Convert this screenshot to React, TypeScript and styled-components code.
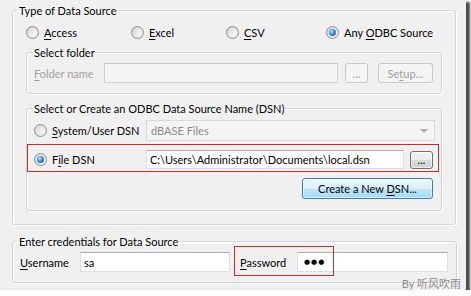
import React from 'react';
import styled, { createGlobalStyle } from 'styled-components';

const GlobalStyle = createGlobalStyle`
  body {
    margin: 0;
    background: #ffffff;
    font-family: Lato, 'Noto Sans', 'Noto Sans CJK SC', sans-serif;
    font-size: 11px;
    color: #000;
  }
`;

const Dialog = styled.div`
  position: relative;
  width: 466px;
  height: 290px;
  box-sizing: border-box;
  padding-top: 3px;
  background: #f0f0f0;
  box-shadow: 3px 3px 2px 1px rgba(45, 45, 45, 0.85);
`;

interface GroupProps {
  $top?: number;
  $left: number;
  $right: number;
  $bottom?: number;
}

const Group = styled.fieldset<GroupProps>`
  margin: ${({ $top }) => $top || 0}px ${({ $right }) => $right}px 0
    ${({ $left }) => $left}px;
  padding: 0 0 ${({ $bottom }) => $bottom || 0}px 0;
  min-width: 0;
  border: 1px solid #d5d5d5;
  border-radius: 3px;
  box-shadow: inset 1px 1px 0 #fff, 1px 1px 0 #fff;
`;

const Legend = styled.legend<{ $offset: number }>`
  margin-left: ${({ $offset }) => $offset}px;
  padding: 0 2px;
  line-height: 15px;
`;

const RadioRow = styled.div`
  display: flex;
  align-items: center;
  height: 16px;
  padding: 6px 0 0 13px;
  margin-bottom: 5px;
`;

const RadioItem = styled.label<{ $width?: number }>`
  display: flex;
  align-items: center;
  gap: 5px;
  width: ${({ $width }) => ($width ? `${$width}px` : 'auto')};
  flex: none;
  white-space: nowrap;
`;

const Radio = styled.span<{ $checked?: boolean }>`
  position: relative;
  width: 11px;
  height: 11px;
  flex: none;
  border-radius: 50%;
  border: 1px solid #8e8f8f;
  background: radial-gradient(circle at 65% 65%, #f7f7f7 0%, #e2e2e2 55%, #c9c9c9 100%);

  &::after {
    content: '';
    display: ${({ $checked }) => ($checked ? 'block' : 'none')};
    position: absolute;
    left: 2px;
    top: 2px;
    width: 7px;
    height: 7px;
    border-radius: 50%;
    background: radial-gradient(circle at 40% 35%, #bfe8ff 0%, #3a8fd9 45%, #104d8c 100%);
  }
`;

const Key = styled.span`
  text-decoration: underline;
  text-underline-offset: 2px;
`;

const FolderRow = styled.div`
  display: flex;
  align-items: center;
  height: 20px;
  padding: 3px 9px 0 7px;
`;

const Label = styled.span<{ $width: number; $disabled?: boolean; $ml?: number }>`
  width: ${({ $width }) => $width}px;
  margin-left: ${({ $ml }) => $ml || 0}px;
  flex: none;
  white-space: nowrap;
  color: ${({ $disabled }) => ($disabled ? '#a2a2a2' : '#000')};
`;

const TextBox = styled.div<{ $width?: number; $disabled?: boolean; $height?: number }>`
  box-sizing: border-box;
  display: flex;
  align-items: center;
  width: ${({ $width }) => ($width ? `${$width}px` : 'auto')};
  flex: ${({ $width }) => ($width ? 'none' : '1')};
  height: ${({ $height }) => $height || 20}px;
  padding: 0 3px;
  border: 1px solid ${({ $disabled }) => ($disabled ? '#d2d2d2' : '#dbdfe6')};
  border-top-color: ${({ $disabled }) => ($disabled ? '#c8c8c8' : '#abadb3')};
  background: ${({ $disabled }) => ($disabled ? '#f4f4f4' : '#ffffff')};
  color: ${({ $disabled }) => ($disabled ? '#8a8a8a' : '#000')};
  white-space: nowrap;
  overflow: hidden;
`;

const Button = styled.div<{ $width: number; $height?: number; $disabled?: boolean; $default?: boolean; $ml?: number }>`
  box-sizing: border-box;
  display: flex;
  align-items: center;
  justify-content: center;
  width: ${({ $width }) => $width}px;
  height: ${({ $height }) => $height || 20}px;
  margin-left: ${({ $ml }) => $ml || 0}px;
  flex: none;
  border-radius: 3px;
  white-space: nowrap;
  border: 1px solid
    ${({ $disabled, $default }) => ($disabled ? '#c5c8ca' : $default ? '#3c7fb1' : '#707070')};
  color: ${({ $disabled }) => ($disabled ? '#9d9d9d' : '#000')};
  background: ${({ $disabled, $default }) =>
    $disabled
      ? '#f4f4f4'
      : $default
      ? 'linear-gradient(#eaf6fd 0%, #d9f0fc 50%, #bee6fd 50%, #a7d9f5 100%)'
      : 'linear-gradient(#f2f2f2 0%, #ebebeb 50%, #dddddd 50%, #cfcfcf 100%)'};
  box-shadow: ${({ $disabled }) => ($disabled ? 'none' : 'inset 0 0 0 1px rgba(255,255,255,0.6)')};
`;

const DsnRow = styled.div`
  display: flex;
  align-items: center;
  height: 21px;
  padding: 4px 6px 0 7px;
`;

const ComboBox = styled.div`
  position: relative;
  box-sizing: border-box;
  flex: 1;
  height: 21px;
  display: flex;
  align-items: center;
  padding: 0 4px;
  border: 1px solid #d9d9d9;
  background: #f4f4f4;
  color: #8a8a8a;

  &::after {
    content: '';
    position: absolute;
    right: 6px;
    top: 8px;
    border-left: 4px solid transparent;
    border-right: 4px solid transparent;
    border-top: 4px solid #b0b0b0;
  }
`;

const HighlightRow = styled.div`
  display: flex;
  align-items: center;
  margin: 3px 2px 0 0;
  padding: 5px 5px 2px 6px;
  border: 1px solid #c0302e;
`;

const ButtonRow = styled.div`
  display: flex;
  justify-content: flex-end;
  padding: 6px 8px 0 0;
`;

const CredentialRow = styled.div`
  position: relative;
  display: flex;
  align-items: center;
  height: 20px;
  padding: 3px 0 0 7px;
`;

const Highlight = styled.div`
  position: absolute;
  left: 221px;
  top: -3px;
  width: 100px;
  height: 30px;
  box-sizing: border-box;
  border: 1px solid #c0302e;
  pointer-events: none;
`;

const Dots = styled.span`
  font-family: 'DejaVu Sans', sans-serif;
  font-size: 7px;
  letter-spacing: 1px;
  padding-left: 3px;
`;

const Watermark = styled.div`
  position: absolute;
  z-index: 1;
  right: 5px;
  top: 277px;
  line-height: 14px;
  color: #8c8c8c;
`;

const App: React.FC = () => {
  return (
    <>
      <GlobalStyle />
      <Dialog>
        <Group $left={12} $right={10} $bottom={13}>
          <Legend $offset={4}>Type of Data Source</Legend>
          <RadioRow>
            <RadioItem $width={105}>
              <Radio />
              <span><Key>A</Key>ccess</span>
            </RadioItem>
            <RadioItem $width={95}>
              <Radio />
              <span><Key>E</Key>xcel</span>
            </RadioItem>
            <RadioItem $width={100}>
              <Radio />
              <span><Key>C</Key>SV</span>
            </RadioItem>
            <RadioItem>
              <Radio $checked />
              <span>Any <Key>O</Key>DBC Source</span>
            </RadioItem>
          </RadioRow>

          <Group $left={13} $right={13} $bottom={10}>
            <Legend $offset={5}>Select folder</Legend>
            <FolderRow>
              <Label $width={70} $disabled>
                <Key>F</Key>older name
              </Label>
              <TextBox $width={234} $disabled />
              <Button $width={23} $disabled $ml={7}>...</Button>
              <Button $width={55} $disabled $ml={10}>
                Se<Key>t</Key>up...
              </Button>
            </FolderRow>
          </Group>

          <Group $top={7} $left={13} $right={13} $bottom={11}>
            <Legend $offset={5}>Select or Create an ODBC Data Source Name (DSN)</Legend>
            <DsnRow>
              <RadioItem $width={112}>
                <Radio />
                <span><Key>S</Key>ystem/User DSN</span>
              </RadioItem>
              <ComboBox>dBASE Files</ComboBox>
            </DsnRow>
            <HighlightRow>
              <RadioItem $width={112}>
                <Radio $checked />
                <span>F<Key>i</Key>le DSN</span>
              </RadioItem>
              <TextBox $width={258} $height={19}>
                C:\Users\Administrator\Documents\local.dsn
              </TextBox>
              <Button $width={23} $height={18} $ml={6}>...</Button>
            </HighlightRow>
            <ButtonRow>
              <Button $width={131} $height={21} $default>
                Create a New&nbsp;<Key>D</Key>SN...
              </Button>
            </ButtonRow>
          </Group>
        </Group>

        <Group $top={9} $left={12} $right={9} $bottom={10}>
          <Legend $offset={4}>Enter credentials for Data Source</Legend>
          <CredentialRow>
            <Label $width={60}>
              <Key>U</Key>sername
            </Label>
            <TextBox $width={150}>sa</TextBox>
            <Label $width={57} $ml={10}>
              <Key>P</Key>assword
            </Label>
            <TextBox $width={151}>
              <Dots>●●●</Dots>
            </TextBox>
            <Highlight />
          </CredentialRow>
        </Group>
        <Watermark>By 听风吹雨</Watermark>
      </Dialog>
    </>
  );
};

export default App;
